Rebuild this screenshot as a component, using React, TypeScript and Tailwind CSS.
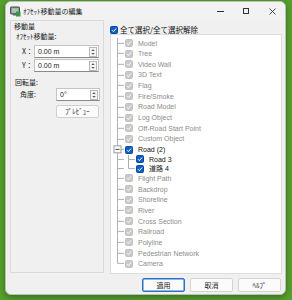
import React from "react";

const jp = { fontFamily: '"Noto Sans CJK JP", "Liberation Sans", sans-serif' };
const latin = { fontFamily: '"Liberation Sans", "Noto Sans CJK JP", sans-serif' };

type Item = { label: string; active?: boolean; expand?: boolean; children?: string[] };

const items: Item[] = [
  { label: "Model" },
  { label: "Tree" },
  { label: "Video Wall" },
  { label: "3D Text" },
  { label: "Flag" },
  { label: "Fire/Smoke" },
  { label: "Road Model" },
  { label: "Log Object" },
  { label: "Off-Road Start Point" },
  { label: "Custom Object" },
  { label: "Road (2)", active: true, expand: true, children: ["Road 3", "道路 4"] },
  { label: "Flight Path" },
  { label: "Backdrop" },
  { label: "Shoreline" },
  { label: "River" },
  { label: "Cross Section" },
  { label: "Railroad" },
  { label: "Polyline" },
  { label: "Pedestrian Network" },
  { label: "Camera" },
];

function Check({ active }: { active?: boolean }) {
  return (
    <svg width="8" height="8" viewBox="0 0 8 8" className="shrink-0">
      <rect
        x="0.5"
        y="0.5"
        width="7"
        height="7"
        rx="1"
        fill={active ? "#0f5fc7" : "#c9c9c9"}
        stroke={active ? "#0b4a9e" : "#c2c2c2"}
      />
      <path d="M2 4.2 L3.4 5.6 L6.1 2.5" fill="none" stroke="#fff" strokeWidth="1" />
    </svg>
  );
}

function Gutter({ h, last, expand }: { h: number; last?: boolean; expand?: boolean }) {
  return (
    <svg width="14" height={h} className="shrink-0">
      <line x1="6.5" y1="0" x2="6.5" y2={last ? h / 2 : h} stroke="#b0b0b0" />
      <line x1="6.5" y1={h / 2} x2="13" y2={h / 2} stroke="#b0b0b0" />
      {expand && (
        <>
          <rect x="3" y={h / 2 - 3.5} width="7" height="7" fill="#fff" stroke="#9a9a9a" />
          <line x1="4.5" y1={h / 2} x2="8.5" y2={h / 2} stroke="#444" />
        </>
      )}
    </svg>
  );
}

function ChildGutter({ h, last }: { h: number; last?: boolean }) {
  return (
    <svg width="11" height={h} className="shrink-0">
      <line x1="3.5" y1="0" x2="3.5" y2={last ? h / 2 : h} stroke="#b0b0b0" />
      <line x1="3.5" y1={h / 2} x2="10" y2={h / 2} stroke="#b0b0b0" />
    </svg>
  );
}

function Spinner() {
  return (
    <svg width="8" height="10" viewBox="0 0 8 10" className="shrink-0">
      <rect x="0.5" y="0.5" width="7" height="9" fill="#f4f4f4" stroke="#b8b8b8" />
      <path d="M2.3 4 L4 2.2 L5.7 4 Z" fill="#555" />
      <path d="M2.3 6 L4 7.8 L5.7 6 Z" fill="#555" />
    </svg>
  );
}

function NumInput({ value, className }: { value: string; className: string }) {
  return (
    <div
      className={`flex h-[13px] items-center justify-between border border-[#c4c4c4] border-b-[#8a8a8a] bg-white pl-[3px] pr-[1px] ${className}`}
    >
      <span className="text-[7px] leading-none text-[#1a1a1a]" style={latin}>
        {value}
      </span>
      <Spinner />
    </div>
  );
}

function Btn({ label, primary }: { label: string; primary?: boolean }) {
  return (
    <div
      className={`flex h-[14px] w-[43px] items-center justify-center rounded-[2px] bg-[#fbfbfb] text-[7px] leading-none text-[#1a1a1a] ${
        primary ? "border border-[#2a6fc9] shadow-[inset_0_0_0_0.5px_#2a6fc9]" : "border border-[#d3d3d3]"
      }`}
      style={jp}
    >
      {label}
    </div>
  );
}

export default function App() {
  const rowH = 10.67;
  const childH = 9.1;
  return (
    <div className="h-[300px] w-[292px] overflow-hidden bg-[#56a02c] pl-[5px] pt-[1px]">
      <div className="flex h-[294px] w-[281px] flex-col overflow-hidden rounded-[6px] border border-[#b9c3b4] bg-[#f0f0f0] shadow-[0_2px_6px_rgba(0,0,0,0.35)]">
        {/* title bar */}
        <div className="flex h-[18px] shrink-0 items-center bg-[#f2f2f2]">
          <svg width="11" height="11" viewBox="0 0 11 11" className="ml-[4px] shrink-0">
            <rect x="0.5" y="1" width="9" height="7" rx="0.5" fill="#7d8a86" stroke="#4a5552" />
            <rect x="1.7" y="2.2" width="6.6" height="4.6" fill="#a9c5b6" />
            <rect x="3" y="8" width="4" height="1.5" fill="#5d6664" />
            <path d="M6 5.5 L10.5 5.5 L10.5 10.5 L6 10.5 Z" fill="#3d8f4a" />
          </svg>
          <span className="ml-[2px] text-[7px] leading-none text-[#222]" style={jp}>
            ｵﾌｾｯﾄ移動量の編集
          </span>
          <div className="ml-auto flex h-full">
            <div className="flex w-[26px] items-center justify-center">
              <div className="h-px w-[7px] bg-[#333]" />
            </div>
            <div className="flex w-[26px] items-center justify-center">
              <div className="h-[6px] w-[6px] border border-[#333]" />
            </div>
            <div className="flex w-[26px] items-center justify-center">
              <svg width="7" height="7" viewBox="0 0 7 7">
                <path d="M0.5 0.5 L6.5 6.5 M6.5 0.5 L0.5 6.5" stroke="#333" strokeWidth="0.9" />
              </svg>
            </div>
          </div>
        </div>

        {/* body */}
        <div className="flex gap-[6px] pl-[4px] pr-[3px]">
          {/* left group */}
          <div className="flex h-[253px] w-[94px] shrink-0 flex-col border border-[#d9d9d9] text-[7px] leading-none text-[#1a1a1a]" style={jp}>
            <div className="flex h-[10px] items-center pl-[3px]">移動量</div>
            <div className="flex h-[10px] items-center pl-[5px]">ｵﾌｾｯﾄ移動量:</div>
            <div className="mt-[4px] flex h-[13px] items-center">
              <span className="ml-[11px] w-[12px]">X：</span>
              <NumInput value="0.00 m" className="w-[65px]" />
            </div>
            <div className="mt-[1px] flex h-[13px] items-center">
              <span className="ml-[11px] w-[12px]">Y：</span>
              <NumInput value="0.00 m" className="w-[65px]" />
            </div>
            <div className="mt-[5px] flex h-[10px] items-center pl-[4px]">回転量:</div>
            <div className="mt-[1px] flex h-[13px] items-center">
              <span className="ml-[9px] w-[36px]">角度:</span>
              <NumInput value="0°" className="w-[44px]" />
            </div>
            <div className="mt-[4px] flex">
              <div className="ml-[45px] flex h-[13px] w-[43px] items-center justify-center rounded-[2px] border border-[#d0d0d0] bg-[#fbfbfb]">
                ﾌﾟﾚﾋﾞｭｰ
              </div>
            </div>
          </div>

          {/* right column */}
          <div className="flex w-[172px] flex-col">
            <div className="mt-[5px] flex h-[9px] items-center gap-[2px]">
              <Check active />
              <span className="text-[7.5px] leading-none text-[#111]" style={jp}>
                全て選択/全て選択解除
              </span>
            </div>
            <div className="h-[240px] border border-[#dcdcdc] bg-white pt-[2.7px]">
              {items.map((it, i) => (
                <React.Fragment key={it.label}>
                  <div className="flex items-center" style={{ height: rowH }}>
                    <Gutter h={rowH} last={i === items.length - 1} expand={it.expand} />
                    <Check active={it.active} />
                    <span
                      className={`ml-[5px] text-[7px] leading-none ${it.active ? "text-[#111]" : "text-[#8c8c8c]"}`}
                      style={latin}
                    >
                      {it.label}
                    </span>
                  </div>
                  {it.children?.map((c, j) => (
                    <div key={c} className="flex items-center" style={{ height: childH }}>
                      <Gutter h={childH} />
                      <ChildGutter h={childH} last={j === it.children!.length - 1} />
                      <Check active />
                      <span className="ml-[5px] text-[7px] leading-none text-[#111]" style={latin}>
                        {c}
                      </span>
                    </div>
                  ))}
                </React.Fragment>
              ))}
            </div>
          </div>
        </div>

        {/* buttons */}
        <div className="mt-[4px] flex justify-end gap-[5px] pr-[4px]">
          <Btn label="適用" primary />
          <Btn label="取消" />
          <Btn label="ﾍﾙﾌﾟ" />
        </div>
      </div>
    </div>
  );
}
